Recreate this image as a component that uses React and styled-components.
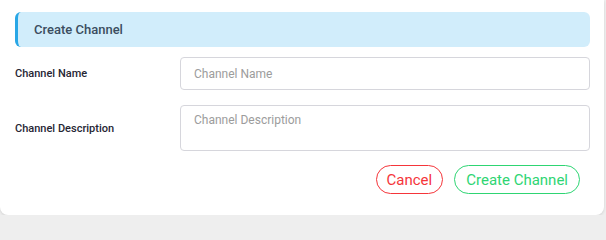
import React from "react";
import styled, { createGlobalStyle } from "styled-components";

const GlobalStyle = createGlobalStyle`
  html, body {
    margin: 0;
    padding: 0;
    background: #eeeeee;
    font-family: Roboto, "Liberation Sans", sans-serif;
  }
`;

const Card = styled.div`
  width: 604px;
  height: 215px;
  box-sizing: border-box;
  background: #fff;
  border-radius: 0 0 8px 8px;
  box-shadow: 0 1px 3px rgba(0, 0, 0, 0.12);
  padding: 12px 14px 0 15px;
`;

const Header = styled.div`
  height: 35px;
  display: flex;
  align-items: center;
  box-sizing: border-box;
  padding-left: 16px;
  background: #d1edfb;
  border-left: 3px solid #29a7e6;
  border-radius: 6px;
  font-size: 13px;
  font-weight: 500;
  color: #3b4d60;
`;

const Row = styled.div`
  display: grid;
  grid-template-columns: 165px 1fr;
  align-items: center;
  margin-top: ${(p) => p.top}px;
`;

const Label = styled.label`
  font-size: 11px;
  font-weight: 500;
  color: #262633;
`;

const fieldBase = `
  width: 100%;
  box-sizing: border-box;
  border: 1px solid #d6d6dc;
  border-radius: 4px;
  font-family: Roboto, "Liberation Sans", sans-serif;
  font-size: 12px;
  color: #333;
  padding: 0 13px;
  outline: none;
  &::placeholder {
    color: #9c9c9c;
  }
`;

const Input = styled.input`
  ${fieldBase}
  height: 33px;
`;

const TextArea = styled.textarea`
  ${fieldBase}
  height: 46px;
  padding-top: 7px;
  resize: none;
  display: block;
`;

const Actions = styled.div`
  display: flex;
  justify-content: flex-end;
  gap: 11px;
  margin-top: 14px;
  padding-right: 10px;
`;

const Button = styled.button`
  height: 29px;
  padding: 0 ${(p) => p.pad}px;
  border-radius: 15px;
  background: #fff;
  border: 1px solid ${(p) => p.color};
  color: ${(p) => p.color};
  font-family: Roboto, "Liberation Sans", sans-serif;
  font-size: 15px;
  cursor: pointer;
`;

export default function App() {
  return (
    <>
      <GlobalStyle />
      <Card>
        <Header>Create Channel</Header>
        <Row top={10}>
          <Label>Channel Name</Label>
          <Input placeholder="Channel Name" />
        </Row>
        <Row top={15}>
          <Label>Channel Description</Label>
          <TextArea placeholder="Channel Description" />
        </Row>
        <Actions>
          <Button color="#f5353a" pad={10}>Cancel</Button>
          <Button color="#2ed573" pad={11}>Create Channel</Button>
        </Actions>
      </Card>
    </>
  );
}
